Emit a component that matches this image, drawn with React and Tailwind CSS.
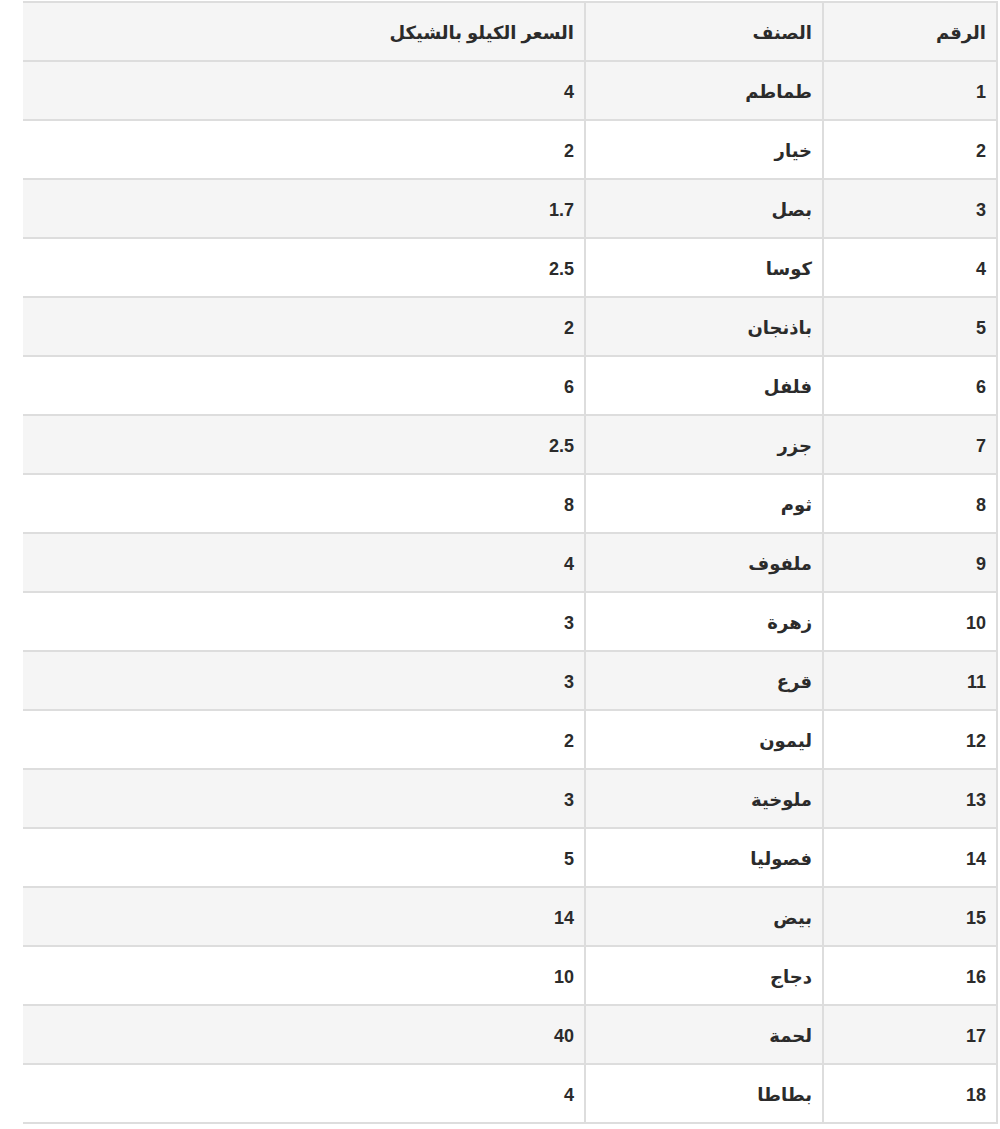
import React from 'react';

const ROWS = [
  ['1', 'طماطم', '4'],
  ['2', 'خيار', '2'],
  ['3', 'بصل', '1.7'],
  ['4', 'كوسا', '2.5'],
  ['5', 'باذنجان', '2'],
  ['6', 'فلفل', '6'],
  ['7', 'جزر', '2.5'],
  ['8', 'ثوم', '8'],
  ['9', 'ملفوف', '4'],
  ['10', 'زهرة', '3'],
  ['11', 'قرع', '3'],
  ['12', 'ليمون', '2'],
  ['13', 'ملوخية', '3'],
  ['14', 'فصوليا', '5'],
  ['15', 'بيض', '14'],
  ['16', 'دجاج', '10'],
  ['17', 'لحمة', '40'],
  ['18', 'بطاطا', '4'],
];

const cell = 'px-[10px] pt-[3px] pb-0 text-right align-middle border-b-2 border-[#dddddd]';

export default function App() {
  return (
    <div className="bg-white w-[1000px] h-[1129px] pt-[1px] pl-[23px] pr-[2px]">
      <table
        dir="rtl"
        className="w-full border-separate border-spacing-0 text-[18px] font-bold text-[#2b2b2b]"
        style={{ fontFamily: '"Liberation Sans", "DejaVu Sans", sans-serif' }}
      >
        <thead>
          <tr className="bg-[#f5f5f5]">
            <th className={`${cell} h-[61px] w-[176px] border-t-2 border-r-2 border-l-2`}>الرقم</th>
            <th className={`${cell} h-[61px] w-[238px] border-t-2 border-l-2`}>الصنف</th>
            <th className={`${cell} h-[61px] border-t-2`}>السعر الكيلو بالشيكل</th>
          </tr>
        </thead>
        <tbody>
          {ROWS.map((r, i) => (
            <tr key={r[0]} className={i % 2 === 0 ? 'bg-[#f5f5f5]' : 'bg-white'}>
              <td className={`${cell} h-[59px] border-r-2 border-l-2`}>{r[0]}</td>
              <td className={`${cell} h-[59px] border-l-2`}>{r[1]}</td>
              <td className={`${cell} h-[59px]`}>{r[2]}</td>
            </tr>
          ))}
        </tbody>
      </table>
    </div>
  );
}
